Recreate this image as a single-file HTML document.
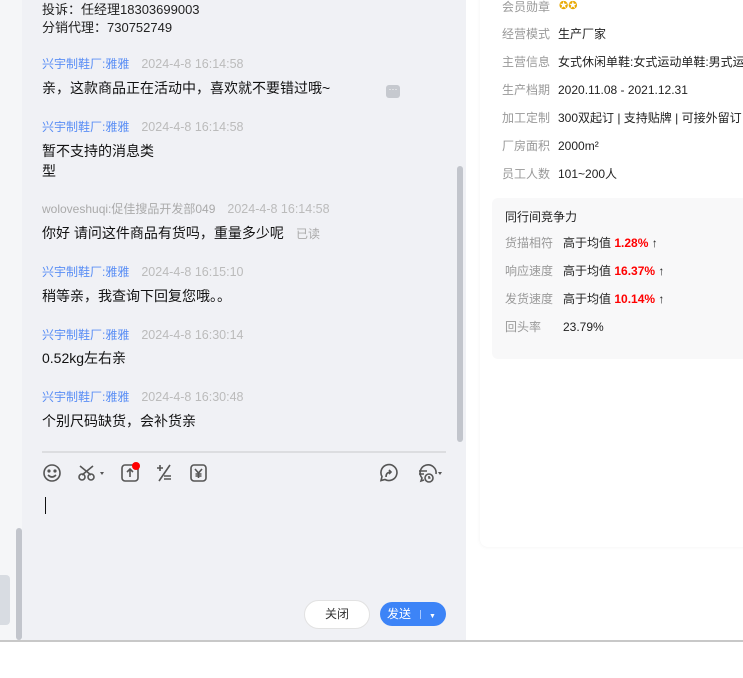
<!DOCTYPE html>
<html><head><meta charset="utf-8"><style>
*{margin:0;padding:0;box-sizing:border-box}
body{width:743px;height:678px;overflow:hidden;background:#fff;font-family:"Liberation Sans","Noto Sans CJK SC",sans-serif;position:relative}
.a{position:absolute;white-space:nowrap;line-height:17px}
.n{font-size:12px;color:#5b8ff5}
.t{font-size:12.5px;color:#bbb;margin-left:12px}
.m{font-size:14px;color:#111}
.lb{font-size:12px;color:#999}
.v{font-size:12px;color:#222}
.r{color:#f00;font-weight:bold}
</style></head><body>
<div class="a" style="left:0;top:0;width:22px;height:640px;background:#f5f6f8"></div>
<div class="a" style="left:0;top:575px;width:10px;height:50px;background:#d8dce2;border-radius:0 4px 4px 0"></div>
<div class="a" style="left:16px;top:528px;width:6px;height:112px;background:#c2c5cc;border-radius:3px"></div>
<div class="a" style="left:22px;top:0;width:444px;height:640px;background:#f0f1f5"></div>
<div class="a" style="left:0;top:640px;width:743px;height:2px;background:#c8c8c8"></div>
<div class="a" style="left:457px;top:166px;width:6px;height:276px;background:#c2c5cc;border-radius:3px"></div>

<div class="a" style="left:42px;top:1px;font-size:13px;color:#222">投诉：任经理18303699003</div>
<div class="a" style="left:42px;top:19px;font-size:13px;color:#222">分销代理：730752749</div>

<div class="a" style="left:42px;top:55px"><span class="n">兴宇制鞋厂:雅雅</span><span class="t">2024-4-8 16:14:58</span></div>
<div class="a m" style="left:42px;top:80px">亲，这款商品正在活动中，喜欢就不要错过哦~</div>
<div class="a" style="left:386px;top:85px;width:14px;height:13px;background:#c6c9cf;border-radius:3px;color:#fff;font-size:9px;line-height:9px;text-align:center">···</div>

<div class="a" style="left:42px;top:118px"><span class="n">兴宇制鞋厂:雅雅</span><span class="t">2024-4-8 16:14:58</span></div>
<div class="a m" style="left:42px;top:143px">暂不支持的消息类</div>
<div class="a m" style="left:42px;top:163px">型</div>

<div class="a" style="left:42px;top:200px"><span class="n" style="color:#aaa">woloveshuqi:促佳搜品开发部049</span><span class="t">2024-4-8 16:14:58</span></div>
<div class="a m" style="left:42px;top:225px">你好 请问这件商品有货吗，重量多少呢</div>
<div class="a" style="left:296px;top:226px;font-size:12px;color:#aaa">已读</div>

<div class="a" style="left:42px;top:263px"><span class="n">兴宇制鞋厂:雅雅</span><span class="t">2024-4-8 16:15:10</span></div>
<div class="a m" style="left:42px;top:288px">稍等亲，我查询下回复您哦。。</div>
<div class="a" style="left:42px;top:326px"><span class="n">兴宇制鞋厂:雅雅</span><span class="t">2024-4-8 16:30:14</span></div>
<div class="a m" style="left:42px;top:350px">0.52kg左右亲</div>
<div class="a" style="left:42px;top:388px"><span class="n">兴宇制鞋厂:雅雅</span><span class="t">2024-4-8 16:30:48</span></div>
<div class="a m" style="left:42px;top:413px">个别尺码缺货，会补货亲</div>

<div class="a" style="left:42px;top:451px;width:404px;height:2px;background:#dcdde0"></div>
<svg class="a" style="left:36px;top:460px" width="420" height="28" fill="none" stroke="#555" stroke-width="1.6">
<circle cx="16" cy="13" r="8"/><circle cx="13" cy="11" r=".8" fill="#555"/><circle cx="19" cy="11" r=".8" fill="#555"/><path d="M12 15q4 4 8 0"/>
<circle cx="46" cy="17" r="3"/><circle cx="55" cy="17" r="3"/><path d="M44 6l11 9M57 6l-11 9"/><path d="M64 12h4l-2 3z" fill="#555" stroke="none"/>
<rect x="86" y="5" width="16" height="16" rx="3"/><path d="M94 17v-7M91 12l3-3 3 3"/>
<path d="M121 8h6M124 5v6M134 5l-11 16M128 16h7M128 19h7"/>
<rect x="155" y="5" width="15" height="16" rx="3"/><path d="M159 9l3.5 4 3.5-4M162.5 13v5M159.5 14h6M159.5 16h6"/>
<path d="M349 19.5a8 8 0 1 0 -3-3l-1 4z"/><path d="M350 17q0-5 5-5M353 10l2 2-2 2"/>
<path d="M388 20l-3 1 1-3a8 8 0 1 1 14-4"/><path d="M383 11h8M383 14h5"/><circle cx="393" cy="18" r="4"/><path d="M393 16v2h1.5"/>
<path d="M402 12h4l-2 3z" fill="#555" stroke="none"/>
</svg>
<div class="a" style="left:132px;top:462px;width:8px;height:8px;background:#f00;border-radius:50%"></div>
<div class="a" style="left:45px;top:497px;width:1px;height:17px;background:#111"></div>

<div class="a" style="left:304px;top:600px;width:66px;height:29px;background:#fff;border:1px solid #e2e2e2;border-radius:15px;font-size:12px;color:#333;text-align:center;line-height:27px">关闭</div>
<div class="a" style="left:380px;top:602px;width:66px;height:24px;background:#3d84f7;border-radius:12px;font-size:12px;color:#fff;line-height:24px;padding-left:7px">发送<span style="display:inline-block;width:1px;height:9px;background:#a8c8ff;margin:0 8px 0 9px;vertical-align:-1px"></span><span style="font-size:7px">▼</span></div>

<div class="a" style="left:480px;top:-10px;width:270px;height:557px;background:#fff;border-radius:8px;box-shadow:0 0 4px rgba(0,0,0,.06)"></div>
<div class="a lb" style="left:502px;top:-1px">会员勋章</div>
<div class="a" style="left:559px;top:-2px;font-size:11px;color:#e8a800">✪✪</div>
<div class="a lb" style="left:502px;top:26px">经营模式</div><div class="a v" style="left:558px;top:26px">生产厂家</div>
<div class="a lb" style="left:502px;top:54px">主营信息</div><div class="a v" style="left:558px;top:54px">女式休闲单鞋:女式运动单鞋:男式运</div>
<div class="a lb" style="left:502px;top:82px">生产档期</div><div class="a v" style="left:558px;top:82px">2020.11.08 - 2021.12.31</div>
<div class="a lb" style="left:502px;top:110px">加工定制</div><div class="a v" style="left:558px;top:110px">300双起订 | 支持贴牌 | 可接外留订</div>
<div class="a lb" style="left:502px;top:138px">厂房面积</div><div class="a v" style="left:558px;top:138px">2000m²</div>
<div class="a lb" style="left:502px;top:166px">员工人数</div><div class="a v" style="left:558px;top:166px">101~200人</div>

<div class="a" style="left:492px;top:198px;width:260px;height:161px;background:#f8f8f9;border-radius:6px"></div>
<div class="a v" style="left:505px;top:209px">同行间竞争力</div>
<div class="a lb" style="left:505px;top:235px">货描相符</div><div class="a v" style="left:563px;top:235px">高于均值 <span class="r">1.28%</span> ↑</div>
<div class="a lb" style="left:505px;top:263px">响应速度</div><div class="a v" style="left:563px;top:263px">高于均值 <span class="r">16.37%</span> ↑</div>
<div class="a lb" style="left:505px;top:291px">发货速度</div><div class="a v" style="left:563px;top:291px">高于均值 <span class="r">10.14%</span> ↑</div>
<div class="a lb" style="left:505px;top:319px">回头率</div><div class="a v" style="left:563px;top:319px">23.79%</div>
</body></html>
